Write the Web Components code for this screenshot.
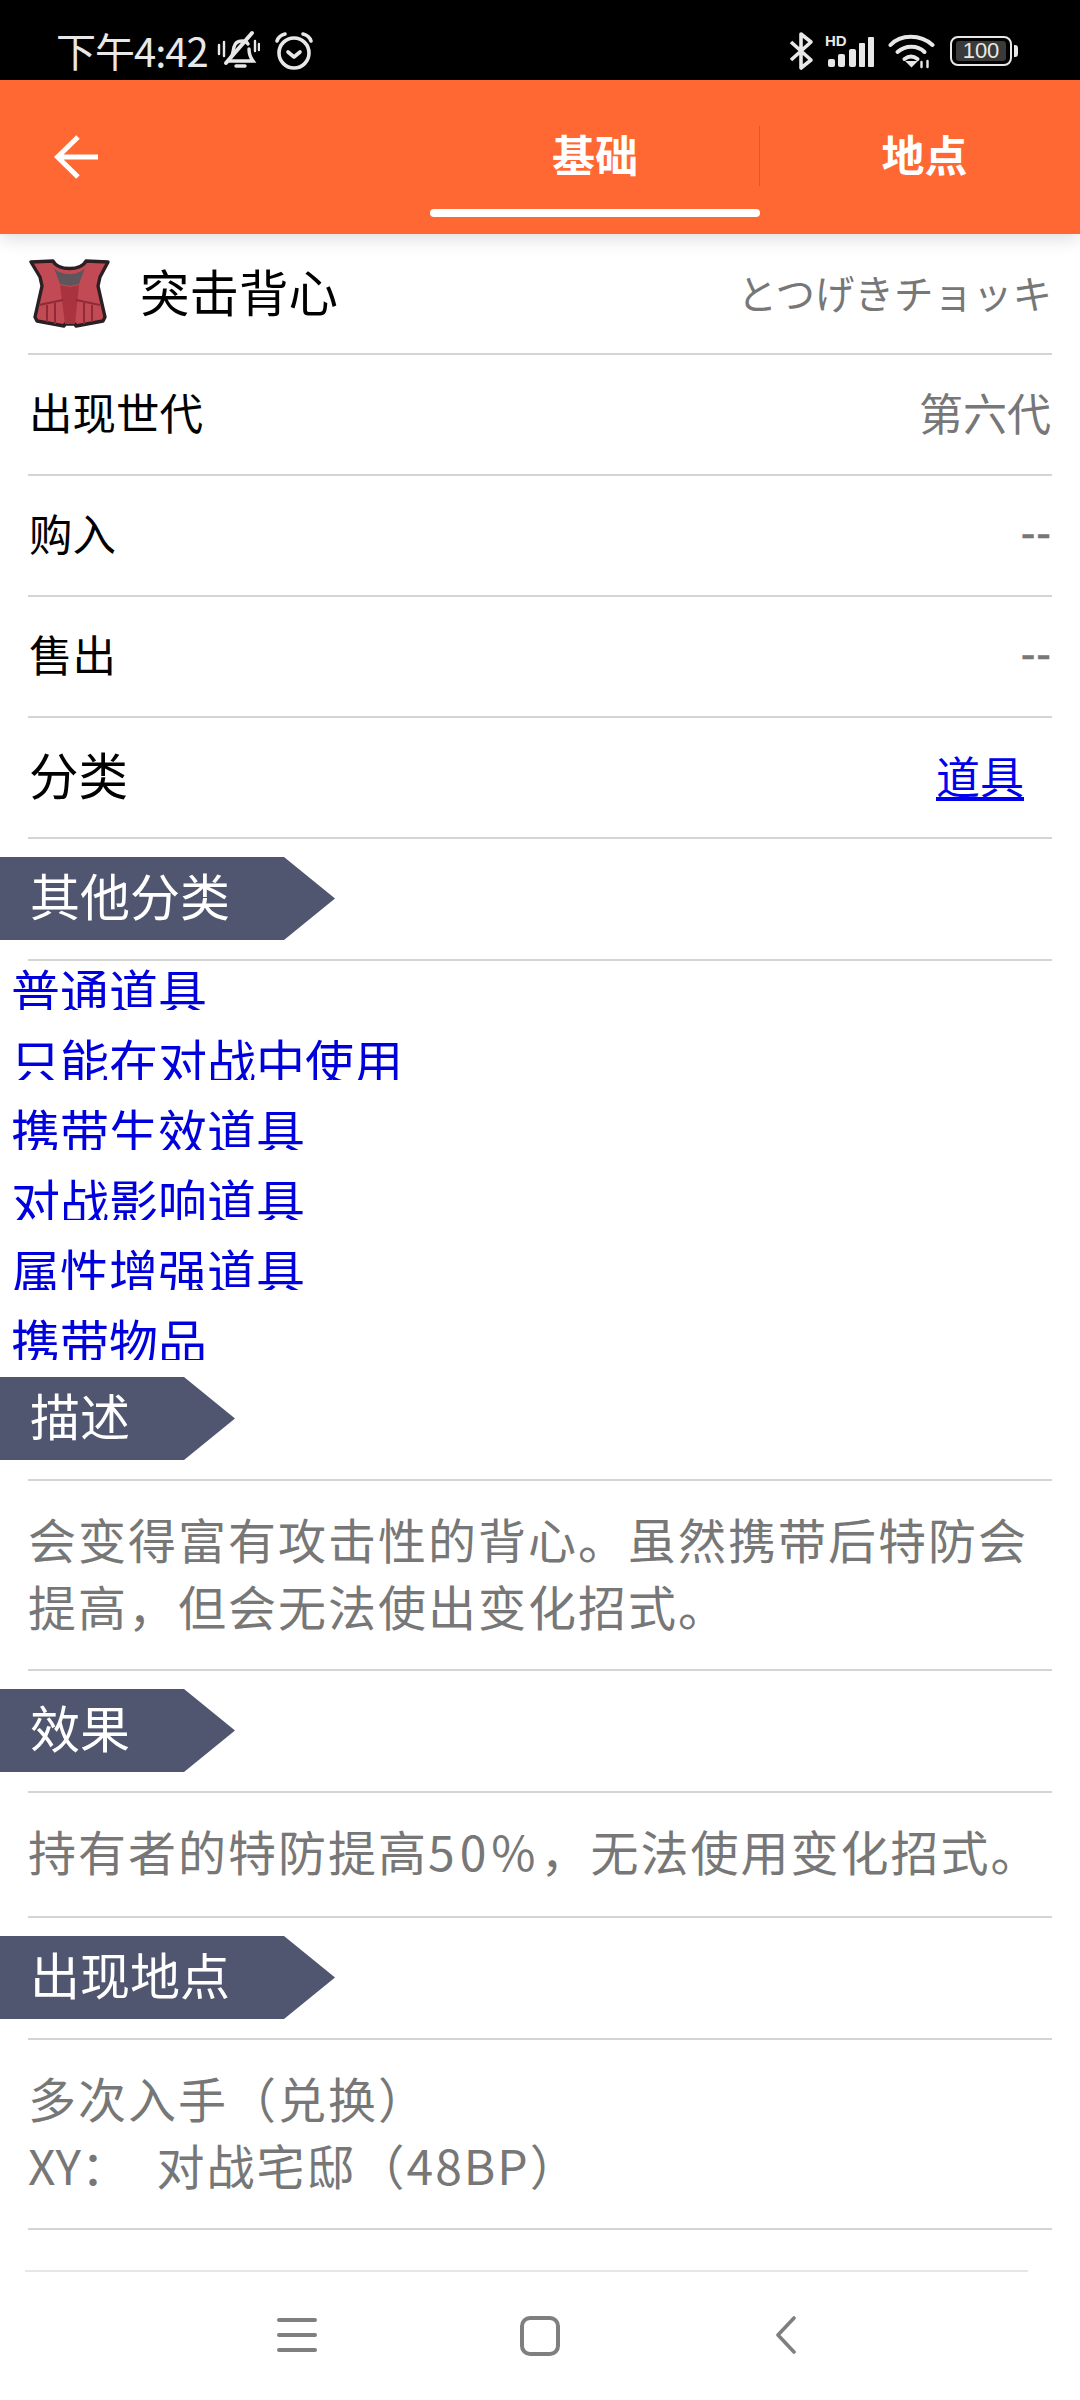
<!DOCTYPE html>
<html lang="zh">
<head>
<meta charset="utf-8">
<title>突击背心</title>
<style>
    html, body { margin: 0; padding: 0; background: #fff; }
    body {
        width: 1080px;
        height: 2400px;
        overflow: hidden;
        display: flex;
        flex-direction: column;
        font-family: "Noto Sans CJK SC", "Noto Sans", sans-serif;
    }
    item-content { flex: 1; }
    .num { letter-spacing: 5px; }
    .xy { letter-spacing: 0; margin-right: 2px; }
</style>
</head>
<body>
<status-bar></status-bar>
<app-bar></app-bar>
<item-content>
    <item-head name="突击背心" jp="とつげきチョッキ"></item-head>
    <info-row label="出现世代" value="第六代"></info-row>
    <info-row label="购入" value="--" dash></info-row>
    <info-row label="售出" value="--" dash></info-row>
    <info-row label="分类" value="道具" big link></info-row>
    <section-banner wide>其他分类</section-banner>
    <link-list>
        <a>普通道具</a>
        <a>只能在对战中使用</a>
        <a>携带生效道具</a>
        <a>对战影响道具</a>
        <a>属性增强道具</a>
        <a>携带物品</a>
    </link-list>
    <section-banner>描述</section-banner>
    <text-block height="190">会变得富有攻击性的背心。虽然携带后特防会<br>提高，但会无法使出变化招式。</text-block>
    <section-banner>效果</section-banner>
    <text-block height="125" style="--shift:-9px">持有者的特防提高<span class="num">50%</span>，无法使用变化招式。</text-block>
    <section-banner wide>出现地点</section-banner>
    <text-block height="190" style="--shift:-7px">多次入手（兑换）<br><span class="xy">XY：</span>&nbsp;&nbsp;对战宅邸（48BP）</text-block>
</item-content>
<nav-bar></nav-bar>

<script>
class StatusBar extends HTMLElement {
    constructor() {
        super();
        this.attachShadow({ mode: 'open' });
        this.shadowRoot.innerHTML = `
            <style>
                :host {
                    display: flex;
                    align-items: center;
                    height: 80px;
                    flex: none;
                    background: #000;
                    color: #e8e8e8;
                    padding: 22px 62px 0 56px;
                    box-sizing: border-box;
                }
                .time { font-size: 40px; line-height: 58px; letter-spacing: -1px; margin: -2px 8px 0 0; }
                svg { display: block; flex: none; }
                .spacer { flex: 1; }
                .batt {
                    display: flex;
                    align-items: center;
                    justify-content: center;
                    width: 58px;
                    height: 26px;
                    border: 2px solid #e8e8e8;
                    border-radius: 8px;
                    margin-left: 15px;
                    margin-top: -1px;
                }
                .batt span {
                    display: block;
                    width: 50px;
                    height: 20px;
                    background: #3a3a3a;
                    border-radius: 3px;
                    font: 22px/20px "Liberation Sans", sans-serif;
                    text-align: center;
                }
                .nub { width: 4px; height: 12px; background: #e8e8e8; border-radius: 0 3px 3px 0; margin: -1px 0 0 2px; }
            </style>
            <span class="time">下午4:42</span>
            <svg width="44" height="44" viewBox="0 0 44 44" fill="none" stroke="#e8e8e8" stroke-width="3.4" stroke-linecap="round">
                <path d="M15 28c2-2 2-6 3-10 1-4 4-6 8-6 3 0 5 1 6 3"/>
                <path d="M33 20c0 4 1 8 4 12H13"/>
                <path d="M36 4 10 34" stroke-width="4"/>
                <path d="M3 16v9M8 13v14M39 12v10M43 15v6" stroke-width="2.4"/>
                <path d="M20 37h9" stroke-width="3.4"/>
            </svg>
            <svg style="margin-left:14px" width="40" height="40" viewBox="0 0 40 40" fill="none" stroke="#e8e8e8" stroke-width="3.6" stroke-linecap="round" stroke-linejoin="round">
                <circle cx="20" cy="22" r="15"/>
                <path d="M14 21l6 5 6-5"/>
                <path d="M3 10c1-3 4-6 8-7M37 10c-1-3-4-6-8-7"/>
            </svg>
            <span class="spacer"></span>
            <svg width="26" height="40" viewBox="0 0 26 40" fill="none" stroke="#e8e8e8" stroke-width="3.6" stroke-linejoin="round">
                <path d="M2 11 22 29 12 37V3l10 8L2 29"/>
            </svg>
            <svg style="margin-left:10px" width="50" height="34" viewBox="0 0 50 34" fill="#e8e8e8">
                <text x="0" y="12" font-family="Liberation Sans" font-weight="700" font-size="15">HD</text>
                <rect x="3" y="25" width="7" height="8" rx="2"/>
                <rect x="13" y="20" width="7" height="13" rx="2"/>
                <rect x="24" y="15" width="7" height="18" rx="2"/>
                <rect x="34" y="9" width="6" height="24" rx="1"/>
                <rect x="43" y="3" width="6" height="30" rx="1"/>
            </svg>
            <svg style="margin-left:13px" width="47" height="36" viewBox="0 0 46 36" fill="none" stroke="#e8e8e8" stroke-width="4" stroke-linecap="round">
                <path d="M2 12C12 1 32 1 44 12"/>
                <path d="M9 19c8-7 20-7 27 0"/>
                <path d="M16 26c4-3 9-3 13 0"/>
                <path d="M19 29l4 4 4-4z" fill="#e8e8e8" stroke-width="2"/>
                <path d="M33 34v-5M39 34v-6" stroke-width="2.4"/>
            </svg>
            <div class="batt"><span>100</span></div>
            <div class="nub"></div>
        `;
    }
}

class AppBar extends HTMLElement {
    constructor() {
        super();
        this.attachShadow({ mode: 'open' });
        this.shadowRoot.innerHTML = `
            <style>
                :host {
                    display: flex;
                    flex: none;
                    height: 154px;
                    background: #ff6833;
                    box-shadow: 0 4px 18px rgba(0,0,0,0.14);
                    position: relative;
                    z-index: 1;
                    color: #fff;
                }
                .back { width: 430px; display: flex; align-items: center; padding: 0 0 0 54px; box-sizing: border-box; }
                .tab {
                    position: relative;
                    width: 330px;
                    display: flex;
                    justify-content: center;
                    font-size: 43px;
                    font-weight: 700;
                    line-height: 147px;
                }
                .tab.on::after {
                    content: "";
                    position: absolute;
                    left: 0;
                    right: 0;
                    top: 129px;
                    height: 8px;
                    border-radius: 4px;
                    background: #fff;
                }
                .tab.on::before {
                    content: "";
                    position: absolute;
                    right: 0;
                    top: 46px;
                    height: 60px;
                    width: 1px;
                    background: #d65a2e;
                }
                .tab + .tab { width: 320px; padding-left: 9px; box-sizing: border-box; }
                svg { display: block; }
            </style>
            <div class="back">
                <svg width="44" height="44" viewBox="0 0 44 44" fill="none" stroke="#fff" stroke-width="5" stroke-linecap="butt" stroke-linejoin="miter">
                    <path d="M44 22H4M24 2 3.5 22 24 42"/>
                </svg>
            </div>
            <div class="tab on">基础</div>
            <div class="tab">地点</div>
        `;
    }
}

class ItemHead extends HTMLElement {
    constructor() {
        super();
        this.attachShadow({ mode: 'open' });
        this.shadowRoot.innerHTML = `
            <style>
                :host {
                    display: flex;
                    align-items: center;
                    height: 121px;
                    margin: 0 28px;
                    border-bottom: 2px solid #d4d4d4;
                    box-sizing: border-box;
                }
                svg { display: block; margin: 1px 0 0 1px; flex: none; }
                .name { font-size: 49.5px; color: #000; margin-left: 30px; flex: 1; line-height: 1; position: relative; top: -3px; }
                .jp { font: 39.5px "Noto Sans CJK JP", sans-serif; color: #777; line-height: 1; position: relative; top: -2px; }
            </style>
            <svg width="81" height="70" viewBox="0 0 81 70">
                <path d="M2 3 L24 2 C29 12 52 12 57 2 L79 3 L71 18 L69 27 L76 58 L74 62 L47 67 L46 65 H36 L35 67 L8 62 L6 58 L13 27 L11 18 Z" fill="#c24a54" stroke="#2a1f23" stroke-width="3.4" stroke-linejoin="round"/>
                <path d="M25 9 C32 17 49 17 56 9 L50 25 L41 27 L31 25 Z" fill="#5f565b"/>
                <path d="M31 26 L36 65 H46 L50 26 L41 28 Z" fill="#a9343f"/>
                <path d="M10 46 L34 41 M47 41 L71 46" stroke="#8f2b36" stroke-width="2" fill="none"/>
                <path d="M18 46v17M26 44v21M55 44v21M63 46v17" stroke="#8f2b36" stroke-width="2" fill="none"/>
            </svg>
            <span class="name"></span>
            <span class="jp"></span>
        `;
        this.shadowRoot.querySelector('.name').textContent = this.getAttribute('name');
        this.shadowRoot.querySelector('.jp').textContent = this.getAttribute('jp');
    }
}

class InfoRow extends HTMLElement {
    constructor() {
        super();
        this.attachShadow({ mode: 'open' });
        this.shadowRoot.innerHTML = `
            <style>
                :host {
                    display: flex;
                    align-items: center;
                    justify-content: space-between;
                    height: 121px;
                    margin: 0 28px;
                    border-bottom: 2px solid #d4d4d4;
                    box-sizing: border-box;
                    line-height: 1;
                }
                span { position: relative; top: -3px; }
                .label { font-size: 43.5px; color: #000; margin-left: 1px; }
                .value { font-size: 44px; color: #777; margin-right: 1px; }
                :host([big]) .label { font-size: 49.5px; top: -4px; }
                :host([link]) .value { font-size: 44px; color: #0000ee; text-decoration: underline; margin-right: 28px; }
                :host([dash]) .value { font: 44px "Liberation Sans", sans-serif; letter-spacing: 1px; margin-right: 0; top: -3px; -webkit-text-stroke: 0.5px #777; }
            </style>
            <span class="label"></span>
            <span class="value"></span>
        `;
        this.shadowRoot.querySelector('.label').textContent = this.getAttribute('label');
        this.shadowRoot.querySelector('.value').textContent = this.getAttribute('value');
    }
}

class SectionBanner extends HTMLElement {
    constructor() {
        super();
        this.attachShadow({ mode: 'open' });
        this.shadowRoot.innerHTML = `
            <style>
                :host {
                    display: block;
                    padding-top: 18px;
                    height: 122px;
                    box-sizing: border-box;
                }
                :host::after {
                    content: "";
                    display: block;
                    height: 2px;
                    background: #d4d4d4;
                    margin: 19px 28px 0;
                }
                .flag {
                    width: 235px;
                    height: 83px;
                    background: #50566f;
                    clip-path: polygon(0 0, 184px 0, 100% 50%, 184px 100%, 0 100%);
                    color: #fff;
                    font-size: 50px;
                    line-height: 74px;
                    padding-left: 30px;
                    box-sizing: border-box;
                }
                :host([wide]) .flag { width: 335px; clip-path: polygon(0 0, 284px 0, 100% 50%, 284px 100%, 0 100%); }
            </style>
            <div class="flag"><slot></slot></div>
        `;
    }
}

class LinkList extends HTMLElement {
    constructor() {
        super();
        this.attachShadow({ mode: 'open' });
        this.shadowRoot.innerHTML = `
            <style>
                :host { display: block; padding: 0 0 0 11px; margin: -21px 0 -1px; position: relative; }
                ::slotted(a) {
                    display: block;
                    height: 70px;
                    box-sizing: border-box;
                    padding-top: 15px;
                    overflow: hidden;
                    font-size: 49px;
                    line-height: 70px;
                    color: #0000dd;
                }
            </style>
            <slot></slot>
        `;
    }
}

class TextBlock extends HTMLElement {
    constructor() {
        super();
        this.attachShadow({ mode: 'open' });
        this.shadowRoot.innerHTML = `
            <style>
                :host {
                    display: flex;
                    align-items: center;
                    margin: 0 28px;
                    border-bottom: 2px solid #d4d4d4;
                    box-sizing: border-box;
                    font-size: 48px;
                    line-height: 67px;
                    color: #777;
                    letter-spacing: 2px;
                }
                div { margin-top: var(--shift, -6px); }
            </style>
            <div><slot></slot></div>
        `;
        this.style.height = this.getAttribute('height') + 'px';
    }
}

class NavBar extends HTMLElement {
    constructor() {
        super();
        this.attachShadow({ mode: 'open' });
        this.shadowRoot.innerHTML = `
            <style>
                :host {
                    display: flex;
                    flex: none;
                    height: 130px;
                    margin: 0 52px 0 25px;
                    border-top: 2px solid #e6e6e6;
                    box-sizing: border-box;
                    align-items: flex-start;
                    padding: 44px 0 0 252px;
                }
                svg { display: block; flex: none; }
            </style>
            <svg width="40" height="38" viewBox="0 0 40 38" fill="none" stroke="#7f7f7f" stroke-width="4" stroke-linecap="round">
                <path d="M2 4H38M2 19H38M2 34H38"/>
            </svg>
            <svg style="margin-left:203px" width="40" height="40" viewBox="0 0 40 40" fill="none" stroke="#7f7f7f" stroke-width="4">
                <rect x="2" y="2" width="36" height="36" rx="8"/>
            </svg>
            <svg style="margin-left:215px" width="22" height="38" viewBox="0 0 22 38" fill="none" stroke="#7f7f7f" stroke-width="3.6" stroke-linecap="round" stroke-linejoin="round">
                <path d="M19 2 3 19 19 36"/>
            </svg>
        `;
    }
}

customElements.define('status-bar', StatusBar);
customElements.define('app-bar', AppBar);
customElements.define('item-head', ItemHead);
customElements.define('info-row', InfoRow);
customElements.define('section-banner', SectionBanner);
customElements.define('link-list', LinkList);
customElements.define('text-block', TextBlock);
customElements.define('nav-bar', NavBar);
</script>
</body>
</html>
